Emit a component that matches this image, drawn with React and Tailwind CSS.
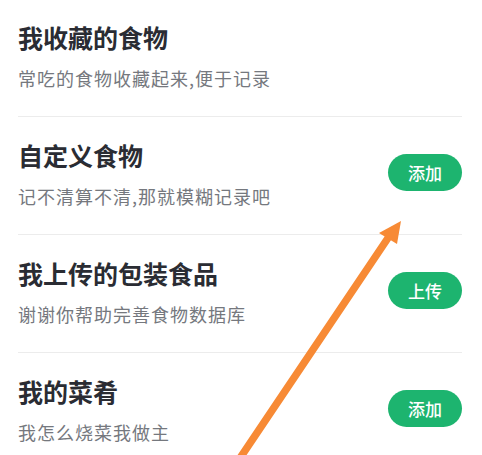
const items = [
  { title: "我收藏的食物", desc: "常吃的食物收藏起来,便于记录", action: null },
  { title: "自定义食物", desc: "记不清算不清,那就模糊记录吧", action: "添加" },
  { title: "我上传的包装食品", desc: "谢谢你帮助完善食物数据库", action: "上传" },
  { title: "我的菜肴", desc: "我怎么烧菜我做主", action: "添加" },
];

const Row = ({ item }) => {
  return (
    <div className="flex items-center justify-between h-[118px] border-b border-[#ececec] pb-[6px]">
      <div className="flex flex-col">
        <h3 className="text-[25px] leading-[34px] font-bold text-[#2a2c33]">{item.title}</h3>
        <p className="mt-[12px] text-[18px] leading-[24px] tracking-[1px] text-[#75787e]">{item.desc}</p>
      </div>
      {item.action && (
        <button className="w-[74px] h-[37px] rounded-full bg-[#1db46f] text-white text-[17px] font-medium">
          {item.action}
        </button>
      )}
    </div>
  );
};

export default function App() {
  return (
    <div
      className="relative w-[482px] h-[455px] overflow-hidden bg-white"
      style={{ fontFamily: '"Noto Sans CJK SC", "Noto Sans", sans-serif' }}
    >
      <div className="ml-[18px] mr-[20px] -mt-[1px]">
        {items.map((item) => (
          <Row key={item.title} item={item} />
        ))}
      </div>
      <svg className="absolute inset-0 pointer-events-none" width="482" height="455">
        <line x1="232" y1="470" x2="388" y2="238" stroke="#f78a35" strokeWidth="7.5" strokeLinecap="round" />
        <polygon points="401,221 379,233 397,244" fill="#f78a35" />
      </svg>
    </div>
  );
}
